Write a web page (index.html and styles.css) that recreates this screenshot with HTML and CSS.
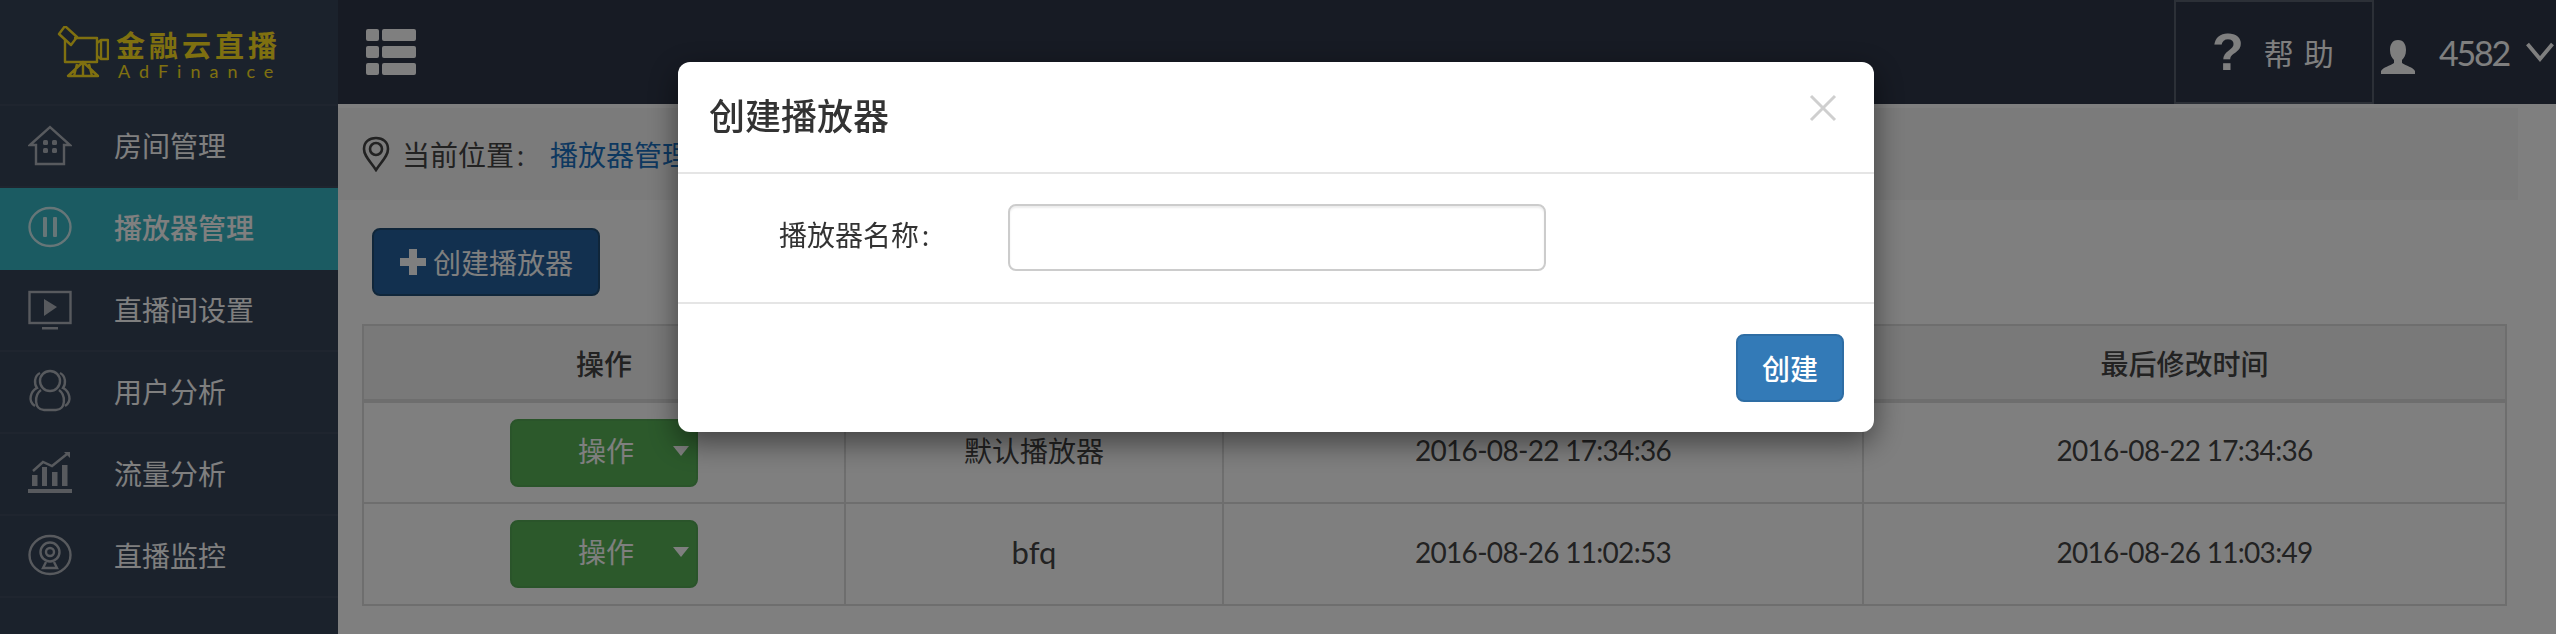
FILE: index.html
```html
<!DOCTYPE html>
<html lang="zh-CN">
<head>
    <meta charset="UTF-8">
    <title>播放器管理</title>
    <link rel="stylesheet" href="styles.css">
</head>
<body>

    <div class="sidebar">
        <div class="logo">
            <svg class="logo-mark" width="52" height="52" viewBox="0 0 52 52" fill="none" stroke="#ffe020" stroke-width="2.4" stroke-linejoin="round">
                <path d="M8 14V36H40V12H17"/>
                <path d="M40 17L44 14H51V33H44L40 30"/>
                <path d="M44 14V33"/>
                <path d="M2 8L8 0L20 11L14 19Z"/>
                <path d="M26 36L11 50H41L26 36ZM20 38L17 50M32 38L35 50M26 38V50"/>
            </svg>
            <div class="logo-text">
                <div class="logo-cn">金融云直播</div>
                <div class="logo-en">AdFinance</div>
            </div>
        </div>

        <div class="menu-item">
            <svg class="menu-icon" width="44" height="44" viewBox="0 0 44 44" fill="none">
                <path d="M2 22L22 4L42 22H36V41H8V22Z"/>
                <rect class="solid" x="15" y="17" width="5" height="5" rx="1.5"/>
                <rect class="solid" x="24" y="17" width="5" height="5" rx="1.5"/>
                <rect class="solid" x="15" y="25" width="5" height="5" rx="1.5"/>
                <rect class="solid" x="24" y="25" width="5" height="5" rx="1.5"/>
            </svg>
            房间管理
        </div>
        <div class="menu-item active">
            <svg class="menu-icon" width="44" height="44" viewBox="0 0 44 44" fill="none">
                <ellipse cx="22" cy="22" rx="20.5" ry="19"/>
                <rect class="solid" x="15" y="12" width="4" height="20" rx="1"/>
                <rect class="solid" x="25" y="12" width="4" height="20" rx="1"/>
            </svg>
            播放器管理
        </div>
        <div class="menu-item">
            <svg class="menu-icon" width="44" height="44" viewBox="0 0 44 44" fill="none">
                <rect x="1.5" y="5" width="41" height="31"/>
                <path class="solid" d="M16 12L29 20L16 29Z"/>
                <rect class="solid" x="14" y="40" width="16" height="2.5"/>
            </svg>
            直播间设置
        </div>
        <div class="menu-item">
            <svg class="menu-icon" width="44" height="44" viewBox="0 0 44 44" fill="none">
                <ellipse cx="22" cy="12" rx="10" ry="10"/>
                <path d="M13 21C6 26 6 41 16 41H28C38 41 38 26 31 21"/>
                <path d="M12 4C6 7 6 15 9 19C3 22 -1 32 7 37"/>
                <path d="M32 4C38 7 38 15 35 19C41 22 45 32 37 37"/>
            </svg>
            用户分析
        </div>
        <div class="menu-item">
            <svg class="menu-icon" width="44" height="44" viewBox="0 0 44 44" fill="none">
                <path d="M5 20L15 11L24 15L39 3"/>
                <path class="solid" d="M36 1H42V7Z"/>
                <rect class="solid" x="4" y="24" width="5.5" height="11"/>
                <rect class="solid" x="14" y="16" width="5" height="19"/>
                <rect class="solid" x="24" y="21" width="5.5" height="14"/>
                <rect class="solid" x="34" y="14" width="5.5" height="21"/>
                <rect class="solid" x="0" y="38" width="44" height="4"/>
            </svg>
            流量分析
        </div>
        <div class="menu-item">
            <svg class="menu-icon" width="44" height="44" viewBox="0 0 44 44" fill="none">
                <ellipse cx="22" cy="22" rx="20.5" ry="19"/>
                <circle cx="22" cy="19" r="9.5"/>
                <circle cx="22" cy="19" r="4"/>
                <path d="M18 29L15 35H29L26 29"/>
            </svg>
            直播监控
        </div>
    </div>

    <div class="main">
        <div class="topbar">
            <div class="list-icon">
                <span class="cell-s"></span><span class="cell-l"></span>
                <span class="cell-s"></span><span class="cell-l"></span>
                <span class="cell-s"></span><span class="cell-l"></span>
            </div>
            <div class="help">
                <span class="help-mark">?</span>
                <span class="help-text">帮助</span>
            </div>
            <div class="user">
                <svg class="user-icon" width="34" height="34" viewBox="0 0 34 34">
                    <path fill="#fff" d="M17 0C11 0 9 5 9 10C9 15 11 18 13 20V23C9 26 2 27 0 31V34H34V31C32 27 25 26 21 23V20C23 18 25 15 25 10C25 5 23 0 17 0Z"/>
                </svg>
                <span class="user-name">4582</span>
                <svg width="28" height="20" viewBox="0 0 28 20" fill="none">
                    <path stroke="#fff" stroke-width="3.8" d="M1.5 2L14 17L26.5 2"/>
                </svg>
            </div>
        </div>

        <div class="crumb">
            <svg width="28" height="36" viewBox="0 0 28 36" fill="none" stroke="#444" stroke-width="2.6">
                <path d="M14 34C8 25 2 20 2 13C2 6 7 2 14 2C21 2 26 6 26 13C26 20 20 25 14 34Z"/>
                <circle cx="14" cy="13" r="6"/>
            </svg>
            <span class="crumb-label">当前位置<span class="colon">:</span></span>
            <a class="crumb-link">播放器管理</a>
        </div>

        <button class="btn-create"><span class="plus"></span>创建播放器</button>

        <table class="tabla">
            <colgroup>
                <col class="col-a"><col class="col-b"><col class="col-c"><col class="col-d">
            </colgroup>
            <tr><th>操作</th><th>播放器名称</th><th>创建时间</th><th>最后修改时间</th></tr>
            <tr>
                <td><button class="btn-op">操作<span class="caret"></span></button></td>
                <td>默认播放器</td>
                <td class="fecha">2016-08-22 17:34:36</td>
                <td class="fecha">2016-08-22 17:34:36</td>
            </tr>
            <tr>
                <td><button class="btn-op">操作<span class="caret"></span></button></td>
                <td class="nombre-latin">bfq</td>
                <td class="fecha">2016-08-26 11:02:53</td>
                <td class="fecha">2016-08-26 11:03:49</td>
            </tr>
        </table>
    </div>

    <!-- modal -->
    <div class="overlay">
        <div class="modal">
            <div class="modal-header">
                <h4>创建播放器</h4>
                <svg class="close" width="28" height="28" viewBox="0 0 28 28">
                    <path stroke="#cfcfcf" stroke-width="3" d="M2 2L26 26M26 2L2 26"/>
                </svg>
            </div>
            <div class="modal-body">
                <label for="nombre">播放器名称<span class="colon">:</span></label>
                <input type="text" id="nombre">
            </div>
            <div class="modal-footer">
                <button class="btn-ok">创建</button>
            </div>
        </div>
    </div>

</body>
</html>
```

FILE: styles.css
```css
* {
    box-sizing: border-box;
}

html, body {
    height: 634px;
    overflow: hidden;
}

body {
    margin: 0;
    display: flex;
    font-family: Lato, "Noto Sans CJK SC", sans-serif;
    font-size: 28px;
    color: #444;
    background-color: #fff;
}

button {
    font-family: inherit;
}

.colon {
    margin-left: 3px;
}

/* sidebar */
.sidebar {
    width: 338px;
    flex-shrink: 0;
    background-color: #364458;
    color: #fff;
}

.logo {
    height: 106px;
    display: flex;
    align-items: flex-start;
    padding: 26px 0 0 57px;
    border-bottom: 2px solid #3e4b5f;
}

.logo-text {
    margin-left: 7px;
    padding-top: 2px;
    color: #ffe020;
}

.logo-cn {
    font-size: 29px;
    line-height: 36px;
    font-weight: 700;
    letter-spacing: 4px;
    white-space: nowrap;
}

.logo-en {
    font-size: 18px;
    line-height: 18px;
    letter-spacing: 9px;
    margin-top: -2px;
    padding-left: 2px;
}

.menu-item {
    height: 82px;
    display: flex;
    align-items: center;
    padding-left: 28px;
    padding-bottom: 2px;
    gap: 42px;
    border-bottom: 2px solid #3e4b5f;
    white-space: nowrap;
}

.menu-item.active {
    background-color: #36b6c4;
    border-bottom-color: #36b6c4;
    font-weight: 500;
}

.menu-icon {
    flex-shrink: 0;
    stroke: #b0b5bc;
    stroke-width: 2.4;
}

.menu-item.active .menu-icon {
    stroke: #fff;
    opacity: .75;
}

.menu-icon .solid {
    fill: #b0b5bc;
    stroke: none;
}

.menu-item.active .menu-icon .solid {
    fill: #fff;
}

/* top */
.main {
    flex: 1;
    min-width: 0;
}

.topbar {
    height: 104px;
    display: flex;
    align-items: center;
    padding-left: 28px;
    background-color: #2e3648;
    color: #fff;
}

.list-icon {
    display: grid;
    grid-template-columns: 13px 34px;
    grid-template-rows: repeat(3, 12px);
    gap: 5px 3px;
}

.list-icon span {
    background-color: #fff;
    border-radius: 2px;
}

.help {
    margin-left: auto;
    width: 200px;
    height: 104px;
    display: flex;
    align-items: center;
    padding-left: 36px;
    border: 2px solid #59616f;
}

.help-mark {
    font-family: "Liberation Sans", sans-serif;
    font-size: 52px;
    font-weight: 700;
    line-height: 1;
}

.help-text {
    font-size: 30px;
    letter-spacing: 10px;
    margin-left: 20px;
}

.user {
    width: 182px;
    display: flex;
    align-items: center;
    padding-left: 7px;
}

.user-icon {
    margin-top: 10px;
}

.user-name {
    font-size: 34px;
    letter-spacing: -2.2px;
    margin-left: 24px;
    margin-right: 17px;
}

/* breadcrumb */
.crumb {
    height: 92px;
    margin: 4px 38px 0 0;
    padding-left: 24px;
    display: flex;
    align-items: center;
    background-color: #f6f6f6;
}

.crumb-label {
    margin-left: 12px;
    width: 148px;
}

.crumb-link {
    color: #1a70c0;
}

.btn-create {
    display: flex;
    align-items: center;
    width: 228px;
    height: 68px;
    margin: 28px 0 0 34px;
    padding: 0 0 0 26px;
    background-color: #24609e;
    border: 2px solid #204d74;
    border-radius: 8px;
    color: #fff;
    font-size: 28px;
}

.plus {
    width: 26px;
    height: 26px;
    margin-right: 7px;
    background:
        linear-gradient(#fff, #fff) center / 100% 8px no-repeat,
        linear-gradient(#fff, #fff) center / 8px 100% no-repeat;
}

/* table */
.tabla {
    table-layout: fixed;
    width: 2143px;
    margin: 28px 0 0 24px;
    border-collapse: collapse;
    text-align: center;
    font-weight: 400;
}

.col-a { width: 482px; }
.col-b { width: 378px; }
.col-c { width: 640px; }
.col-d { width: 643px; }

.tabla th, .tabla td {
    border: 2px solid #ddd;
    padding: 0;
}

.tabla th {
    height: 76px;
    font-weight: 500;
    background-color: #f3f3f3;
    border-bottom-width: 4px;
}

.tabla td {
    height: 102px;
    padding-bottom: 5px;
}

.tabla .fecha {
    letter-spacing: -.7px;
}

.tabla .nombre-latin {
    font-size: 31px;
}

.btn-op {
    position: relative;
    width: 188px;
    height: 68px;
    margin-top: 5px;
    padding: 0 0 6px 4px;
    vertical-align: middle;
    background-color: #58b357;
    border: 2px solid #54a854;
    border-radius: 8px;
    color: #fff;
    font-size: 28px;
}

.caret {
    position: absolute;
    right: 7px;
    top: 25px;
    border-top: 10px solid #fff;
    border-left: 8px solid transparent;
    border-right: 8px solid transparent;
}

/* modal */
.overlay {
    position: fixed;
    inset: 0;
    padding: 62px 4px 0 0;
    display: flex;
    justify-content: center;
    align-items: flex-start;
    background-color: rgba(0, 0, 0, .5);
}

.modal {
    width: 1196px;
    height: 370px;
    background-color: #fff;
    border-radius: 12px;
    box-shadow: 0 10px 30px rgba(0, 0, 0, .5);
    color: #333;
}

.modal-header {
    height: 112px;
    display: flex;
    justify-content: space-between;
    align-items: center;
    padding: 0 37px 6px 31px;
    border-bottom: 2px solid #e5e5e5;
}

.modal-header h4 {
    margin: 0;
    font-size: 36px;
    font-weight: 500;
}

.close {
    margin-top: -12px;
}

.modal-body {
    height: 130px;
    display: flex;
    align-items: center;
    padding-left: 101px;
    border-bottom: 2px solid #e5e5e5;
}

.modal-body label {
    width: 229px;
    flex-shrink: 0;
    margin-top: -8px;
}

.modal-body input {
    width: 538px;
    height: 67px;
    margin-top: -2px;
    border: 2px solid #ccc;
    border-radius: 8px;
    box-shadow: inset 0 2px 2px rgba(0, 0, 0, .075);
}

.modal-footer {
    display: flex;
    justify-content: flex-end;
    padding: 30px 30px 0 0;
}

.btn-ok {
    width: 108px;
    height: 68px;
    padding: 0;
    background-color: #337ab7;
    border: 2px solid #2e6da4;
    border-radius: 8px;
    color: #fff;
    font-size: 28px;
    font-weight: 500;
}
```
